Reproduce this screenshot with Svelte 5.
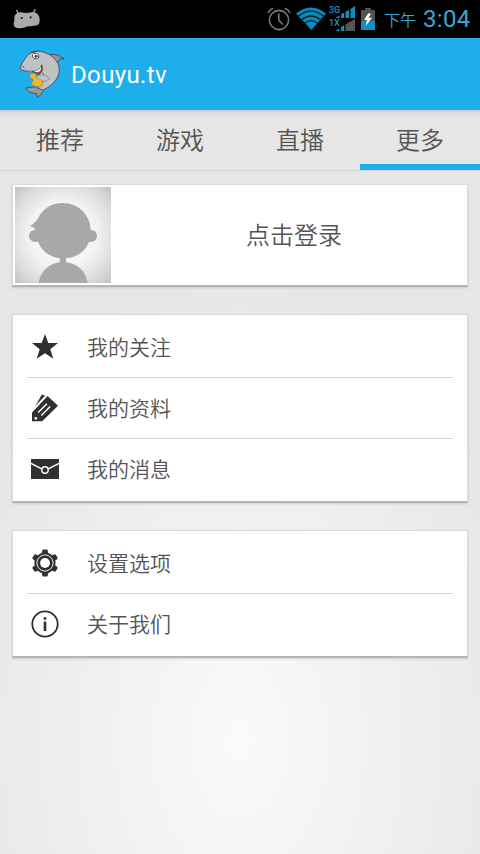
<script>
  const tabs = ['推荐', '游戏', '直播', '更多'];
  const active = 3;
  const groups = [
    [
      { icon: 'star', label: '我的关注' },
      { icon: 'pencil', label: '我的资料' },
      { icon: 'mail', label: '我的消息' }
    ],
    [
      { icon: 'gear', label: '设置选项' },
      { icon: 'info', label: '关于我们' }
    ]
  ];
</script>

<div class="screen">
  <div class="status">
    <svg class="droid" width="28" height="22" viewBox="0 0 84 66">
      <path d="M11 4 L16 14 M66 1 L61 14" stroke="#9d9d9d" stroke-width="4" stroke-linecap="round" />
      <path d="M4 32 C3 17 12 9 24 10 C34 13 45 13 55 10 C69 6 81 19 80 33 C80 44 76 50 66 50 C59 50 56 52 49 52 C43 52 38 55 28 57 C12 60 3 57 2 46 C1 40 4 38 4 32 Z" fill="#a9a9a9" />
      <circle cx="26" cy="27" r="3" fill="#111" />
      <circle cx="53" cy="25" r="3" fill="#111" />
    </svg>
    <div class="indicators">
      <svg class="alarm" width="24" height="24" viewBox="0 0 24 24" fill="none" stroke="#7a7a7a" stroke-width="1.6">
        <circle cx="12" cy="13" r="9.6" />
        <path d="M11.8 6.5 V13.3 L15.8 17.5 M1 6 Q2.5 2.5 6.2 1.3 M17.8 1.3 Q21.5 2.5 23 6" />
      </svg>
      <svg class="wifi" width="30" height="24" viewBox="0 0 30 24">
        <path d="M0 6.5 Q15 -5.5 30 6.5 L15.4 23 Z" fill="#0a8ab8" />
        <g fill="none" stroke="#001f2b" stroke-width="1.3">
          <path d="M2.4 9.2 Q15 -.8 27.6 9.2 M5.4 12.8 Q15 5.2 24.6 12.8 M8.6 16.2 Q15 11.2 21.4 16.2" />
        </g>
      </svg>
      <svg class="signal" width="27" height="28" viewBox="0 0 27 28">
        <g fill="#0f8dbb">
          <path d="M6 13 L10.5 10.5 V13 Z M12 9.2 L15.2 7.5 V13 H12 Z M16.5 6.8 L20 4.8 V13 H16.5 Z M21.5 4 L26 1 V13 H21.5 Z" />
          <path d="M6 26 L10.5 23.5 V26 Z M12 22 L15.2 20 V26 H12 Z" />
        </g>
        <path d="M16.5 19.5 L26 14 V26 H16.5 Z" fill="#555" />
        <text x="0" y="8">3G</text>
        <text x="0" y="21">1X</text>
      </svg>
      <svg class="battery" width="14" height="22" viewBox="0 0 14 22">
        <path d="M4 0 H10 V2 H14 V13 H0 V2 H4 Z" fill="#535353" />
        <rect y="13" width="14" height="9" fill="#0a92c2" />
        <path d="M7.5 5 L3 12 H6 L4.7 18 L11 9.8 H7.5 L10 6 Z" fill="#fff" />
      </svg>
      <span class="ampm">下午</span>
      <span class="time">3:04</span>
    </div>
  </div>

  <header>
    <svg class="logo" width="50" height="58" viewBox="0 0 150 174" stroke-linejoin="round" stroke-linecap="round">
      <g stroke="#3c464c" stroke-width="2.5">
        <path d="M103 30 Q119 21 147 42 Q133 37 128 53 Z" fill="#8e9396" />
        <path d="M76 126 Q55 125 32 129 Q40 145 64 145 L67 157 Q81 149 83 139 Q88 129 96 124 Z" fill="#999c9e" />
        <path d="M15 69 C24 47 38 25 57 19 C89 15 120 33 131 60 C139 92 119 119 84 135 L66 129 C83 122 87 105 84 84 L69 78 L38 79 Q15 76 15 69 Z" fill="#bfc1c2" />
      </g>
      <path d="M37 79 Q69 79 75 57 Q87 73 76 88 Q66 99 64 128 Q78 118 84 95 L81 78 Z" fill="#dcdede" />
      <path d="M52 79 Q74 77 80 59 Q88 79 72 88 Z" fill="#a5443a" stroke="#35383a" stroke-width="2" />
      <path d="M55 79 Q71 78 78 65 Q80 78 67 82 Z" fill="#fff" />
      <path d="M66 122 Q99 121 109 87 L125 90 Q114 120 84 133 Z" fill="#bfc1c2" />
      <path d="M65 94 Q85 82 104 101 Q93 111 78 110 L64 104 Z" fill="#c3c5c7" stroke="#596066" stroke-width="1.5" />
      <path d="M43 92 Q44 85 54 85 Q65 85 64 99 L80 105 Q87 122 76 125 L53 122 Q45 115 57 106 L49 100 Z" fill="#f4b52e" stroke="#9f7424" stroke-width="1.5" />
      <ellipse cx="62" cy="33" rx="10" ry="8" fill="#fff" stroke="#42484c" stroke-width="2.5" transform="rotate(20 62 33)" />
      <circle cx="63" cy="34" r="4.5" fill="#603d33" />
      <path d="M50 23 L64 19 M24 65 L27 67" fill="none" stroke="#34383a" stroke-width="3" />
    </svg>
    <h1>Douyu.tv</h1>
  </header>

  <nav>
    {#each tabs as tab, i}
      <div class="tab" class:active={i === active}>{tab}</div>
    {/each}
  </nav>

  <main>
    <section class="card login">
      <svg class="avatar" width="96" height="96" viewBox="0 0 288 288">
        <defs>
          <radialGradient id="glow" cx=".5" cy=".5" r=".7">
            <stop offset="0" stop-color="#fff" />
            <stop offset=".5" stop-color="#f3f3f3" />
            <stop offset=".78" stop-color="#dcdcdc" />
            <stop offset="1" stop-color="#c4c4c4" />
          </radialGradient>
        </defs>
        <rect width="288" height="288" fill="url(#glow)" />
        <g fill="#a8a8a8">
          <path d="M45 117 Q58 111 68 96 C82 65 110 48 143 48 C190 48 226 83 227 129 C238 127 247 137 246 149 C245 160 233 167 222 164 C212 191 188 211 153 214 V226 C188 230 213 253 218 288 H71 C77 254 100 230 134 226 V214 C104 210 79 191 69 164 C55 168 43 160 42 148 C41 137 49 129 62 129 Q58 120 45 117 Z" />
        </g>
      </svg>
      <span>点击登录</span>
    </section>

    {#each groups as group}
      <section class="card list">
        {#each group as item}
          <div class="row">
            <svg class="icon" width="28" height="28" viewBox="0 0 28 28">
              {#if item.icon === 'star'}
                <path d="M14 1 L17.3 10 H27 L19.3 16.2 L22.3 25.8 L14 20.3 L5.7 25.8 L8.7 16.2 L1 10 H10.7 Z" fill="#303030" />
              {:else if item.icon === 'pencil'}
                <path d="M1 18.4 L16.6 2 L27 11.7 L11.2 27.3 H1 Z M3.4 24.3 A1.4 1.4 0 1 0 6.2 24.3 A1.4 1.4 0 1 0 3.4 24.3 Z" fill="#303030" fill-rule="evenodd" />
                <path d="M4.2 12.6 L10.8 .5 L14.6 1.9 Z" fill="#303030" />
                <path d="M3.5 14.2 L14 2.6 M7.2 18.4 L15.9 9.7 M10.3 21.4 L19.2 12.5" fill="none" stroke="#fff" stroke-width="1.4" />
              {:else if item.icon === 'mail'}
                <rect x="0" y="4" width="28" height="20" fill="#303030" />
                <path d="M0 8.3 L10.7 13.8 M17.3 13.8 L28 8.3" stroke="#fff" stroke-width="1.5" />
                <circle cx="14" cy="15" r="3.2" fill="#303030" stroke="#fff" stroke-width="1.4" />
              {:else if item.icon === 'gear'}
                <g fill="#303030">
                  {#each [0, 60, 120, 180, 240, 300] as angle}
                    <path transform="rotate({angle} 14 14)" d="M10.8 6 L11.2 1.7 Q11.3 .5 12.5 .5 H15.5 Q16.7 .5 16.8 1.7 L17.2 6 Z" />
                  {/each}
                  <circle cx="14" cy="14" r="10.6" />
                </g>
                <circle cx="14" cy="14" r="8.1" fill="none" stroke="#fff" stroke-width=".9" />
                <circle cx="14" cy="14" r="4.9" fill="#fff" />
              {:else}
                <circle cx="14" cy="14" r="12.7" fill="none" stroke="#303030" stroke-width="1.8" />
                <path d="M12.7 7.3 H15.3 V9.8 H12.7 Z M12.7 11.5 H15.3 V21 H12.7 Z" fill="#303030" />
              {/if}
            </svg>
            <span>{item.label}</span>
          </div>
        {/each}
      </section>
    {/each}
  </main>
</div>

<style>
  :global(body) {
    margin: 0;
  }
  .screen {
    width: 480px;
    height: 854px;
    overflow: hidden;
    display: flex;
    flex-direction: column;
    color: #545454;
    font-family: Roboto, 'Noto Sans CJK SC', sans-serif;
    background: radial-gradient(ellipse 300px 470px at 240px 740px, #fafafa, #f1f1f1 45%, #e6e6e6);
  }
  svg {
    display: block;
    flex: none;
  }
  .status {
    height: 38px;
    flex: none;
    background: #000;
    display: flex;
    justify-content: space-between;
    align-items: flex-start;
    box-sizing: border-box;
    padding: 0 10px 0 13px;
    color: #35a9d6;
  }
  .droid {
    margin-top: 9px;
  }
  .indicators {
    display: flex;
    height: 38px;
  }
  .alarm {
    margin: 7px 5px 0 0;
  }
  .wifi {
    margin: 7px 3px 0 0;
  }
  .signal {
    margin: 5px 5px 0 0;
  }
  .signal text {
    fill: #1591be;
    font: 500 9px Roboto, sans-serif;
  }
  .battery {
    margin: 8px 9px 0 0;
  }
  .ampm {
    font-size: 16px;
    line-height: 42px;
    font-weight: 350;
    margin-right: 7px;
  }
  .time {
    font-size: 24px;
    line-height: 39px;
    letter-spacing: 0.3px;
    width: 47px;
    white-space: nowrap;
  }
  header {
    height: 72px;
    flex: none;
    display: flex;
    align-items: center;
    background: #1eaeec;
    color: #fff;
    padding-left: 15px;
  }
  .logo {
    margin-right: 6px;
  }
  h1 {
    margin: 0;
    font-size: 24px;
    font-weight: 400;
    line-height: 30px;
    letter-spacing: 0.35px;
    padding-top: 1px;
  }
  nav {
    height: 61px;
    flex: none;
    box-sizing: border-box;
    display: flex;
    background: linear-gradient(#c9c9c9, #dedede 3px, #e6e6e6 8px);
    border-bottom: 1px solid #d3d3d3;
  }
  .tab {
    flex: 1;
    box-sizing: border-box;
    height: 60px;
    text-align: center;
    font-size: 24px;
    font-weight: 350;
    line-height: 62px;
  }
  .active {
    border-bottom: 6px solid #1eaeec;
  }
  main {
    padding: 13px 12px 0;
    display: flex;
    flex-direction: column;
    gap: 27px;
  }
  .card {
    box-sizing: border-box;
    background: #fff;
    border: 1px solid #dadada;
    border-bottom: 2px solid #b4b4b4;
    box-shadow: 0 1px 2px #0002;
  }
  .login {
    height: 103px;
    display: flex;
    align-items: flex-start;
    padding: 2px 0 0 2px;
  }
  .login span {
    flex: 1;
    text-align: center;
    font-size: 24px;
    font-weight: 350;
    line-height: 98px;
    padding-left: 10px;
  }
  .list {
    padding: 2px 14px;
  }
  .row {
    height: 60px;
    display: flex;
    align-items: center;
    gap: 28px;
    padding-left: 4px;
    font-size: 21px;
    font-weight: 350;
  }
  .row span {
    padding-bottom: 2px;
  }
  .row + .row {
    border-top: 1px solid #d2d2d2;
  }
</style>
